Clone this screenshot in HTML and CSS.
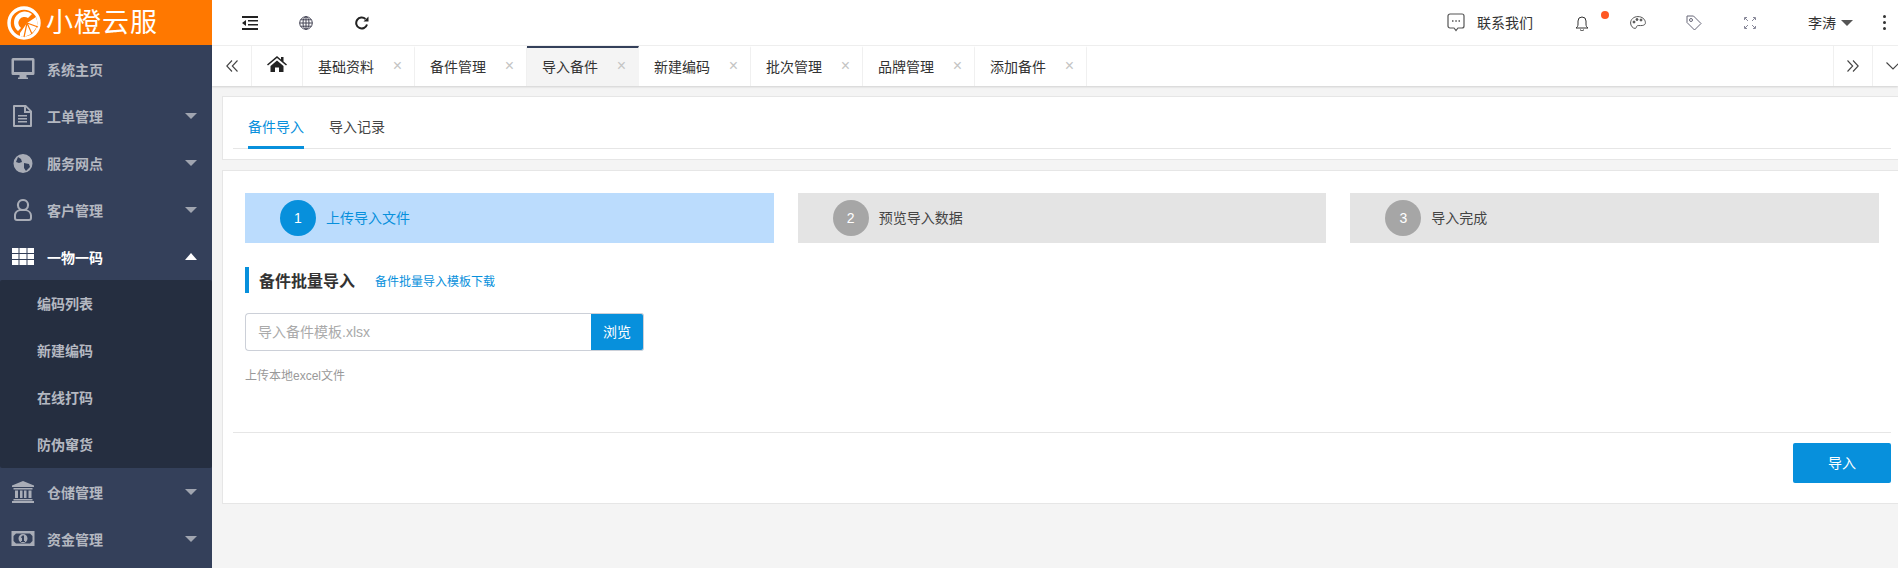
FILE: index.html
```html
<!DOCTYPE html>
<html lang="zh-CN">
<head>
    <meta charset="UTF-8">
    <title>小橙云服</title>
    <link rel="stylesheet" href="styles.css">
</head>
<body>
<div id="app">
    <aside class="sidebar">
        <div class="logo">
            <svg class="logo-mark" viewBox="0 0 34 34">
                <circle cx="17" cy="17" r="15" fill="none" stroke="#fff" stroke-width="3.4"/>
                <path d="M11 25 A11 11 0 0 1 25 8 L21 12 A6 6 0 0 0 14 22z" fill="#fff"/>
                <path d="M13 27 L20 17 L29 11 A14 14 0 0 1 13 30z" fill="#fff"/>
                <path d="M20 17 L17 31 M20 17 L25 28 M20 17 L31 21" stroke="#ff7800" stroke-width="1.2"/>
            </svg>
            <span class="logo-text">小橙云服</span>
        </div>
        <ul class="menu">
            <li class="menu-item">
                <svg class="menu-icon" viewBox="0 0 24 22"><path fill-rule="evenodd" d="M2 0h20a1.500 1.500 0 0 1 1.500 1.500v14a1.500 1.500 0 0 1-1.500 1.500H2a1.500 1.500 0 0 1-1.500-1.500v-14A1.500 1.500 0 0 1 2 0zM3 2.500v11.500h18V2.500z"/><path d="M8.500 17h7v2.500h1.500V21H7v-1.500h1.500z"/></svg>
                <span>系统主页</span>
            </li>
            <li class="menu-item">
                <svg class="menu-icon" viewBox="0 0 24 22"><path fill-rule="evenodd" d="M3 0h12l6 6v15a1 1 0 0 1-1 1H3a1 1 0 0 1-1-1V1a1 1 0 0 1 1-1zM4 2v18h15V8h-6V2zM15 2.500V6h3.500z"/><path d="M7 10h9v1.500H7zM7 13h9v1.500H7zM7 16h9v1.500H7z"/></svg>
                <span>工单管理</span><i class="caret"></i>
            </li>
            <li class="menu-item">
                <svg class="menu-icon" viewBox="0 0 24 22"><path fill-rule="evenodd" d="M12 2a9.500 9.500 0 1 1 0 19 9.500 9.500 0 0 1 0-19zM7 5l3 2 1 3-3 1-3-1zM13 11l5 1 1 3-4 4-2-3z"/></svg>
                <span>服务网点</span><i class="caret"></i>
            </li>
            <li class="menu-item">
                <svg class="menu-icon" viewBox="0 0 24 22"><path fill-rule="evenodd" d="M12 0a6 6 0 0 1 4 10.500c2.500 1 5 3 5 6V19a3 3 0 0 1-3 3H6a3 3 0 0 1-3-3v-2.500c0-3.500 2.500-5.500 5-6A6 6 0 0 1 12 0zM12 2a4 4 0 1 0 0 8 4 4 0 0 0 0-8zM9 12c-2.500.5-4 2.300-4 4.500V19a1 1 0 0 0 1 1h12a1 1 0 0 0 1-1v-2.500c0-2.200-1.500-4-4-4.500z"/></svg>
                <span>客户管理</span><i class="caret"></i>
            </li>
            <li class="menu-item open">
                <svg class="menu-icon" viewBox="0 0 24 22"><path d="M1 2h6.500v5H1zM8.500 2h7v5h-7zM16.500 2H23v5h-6.500zM1 8h6.500v5H1zM8.500 8h7v5h-7zM16.500 8H23v5h-6.500zM1 14h6.500v5H1zM8.500 14h7v5h-7zM16.500 14H23v5h-6.500z"/></svg>
                <span>一物一码</span><i class="caret up"></i>
            </li>
            <li>
                <ul class="submenu">
                    <li>编码列表</li>
                    <li>新建编码</li>
                    <li>在线打码</li>
                    <li>防伪窜货</li>
                </ul>
            </li>
            <li class="menu-item">
                <svg class="menu-icon" viewBox="0 0 24 22"><path d="M12 0l11 4.500V6H1V4.500zM2.500 7h19v1.500h-19zM4 9.500h3V17H4zM9 9.500h2.500V17H9zM13 9.500h2.500V17H13zM17.500 9.500h3V17h-3zM2.500 18h19v1.500h-19zM1 20h22v2H1z"/></svg>
                <span>仓储管理</span><i class="caret"></i>
            </li>
            <li class="menu-item">
                <svg class="menu-icon" viewBox="0 0 24 22"><path fill-rule="evenodd" d="M.5 3h23v15H.5zM5 5.500L2.500 8v5L5 15.500h14l2.500-2.500V8L19 5.500zM12 6a4.500 4.500 0 1 1 0 9 4.500 4.500 0 0 1 0-9zM11.500 7.500L10 9v1l1-.5V13h-1v1h4v-1h-1V7.500z"/></svg>
                <span>资金管理</span><i class="caret"></i>
            </li>
        </ul>
    </aside>

    <div class="main">
        <header class="topbar">
            <svg class="tool-icon first" viewBox="0 0 16 14"><path d="M0 0h16v2H0zM6 4h10v1.500H6zM6 8h10v1.500H6zM0 12h16v2H0zM4 4v6L0 7z" fill="#222"/></svg>
            <svg class="tool-icon" viewBox="0 0 14 14" fill="none" stroke="#445" stroke-width="1"><circle cx="7" cy="7" r="6.300"/><ellipse cx="7" cy="7" rx="3" ry="6.300"/><path d="M7 .7v12.600M.7 7h12.600M1.600 3.800h10.800M1.600 10.200h10.800"/></svg>
            <svg class="tool-icon" viewBox="0 0 14 14" fill="none" stroke="#222" stroke-width="2"><path d="M12 8.500A5.500 5.500 0 1 1 10.500 3"/><path d="M13.500 .5v5h-5z" fill="#222" stroke="none"/></svg>

            <div class="topbar-right">
                <svg class="r-chat" viewBox="0 0 18 19" fill="none" stroke="#555" stroke-width="1.200"><path d="M3 1h12a2 2 0 0 1 2 2v10a2 2 0 0 1-2 2h-4l-2 2.500L7 15H3a2 2 0 0 1-2-2V3a2 2 0 0 1 2-2z"/><path d="M5 8h1.500M8.300 8h1.500M11.500 8H13" stroke-width="1.500"/></svg>
                <span class="contact">联系我们</span>
                <span class="r-bell">
                    <svg viewBox="0 0 14 16" fill="none" stroke="#333" stroke-width="1"><path d="M1 13c1.500-1 2-2 2-4V6a4 4 0 0 1 8 0v3c0 2 .5 3 2 4zM5.500 14.500a1.500 1.500 0 0 0 3 0" /></svg>
                    <i class="dot"></i>
                </span>
                <svg class="r-palette" viewBox="0 0 16 13" fill="none" stroke="#555" stroke-width="1"><path d="M8 .6C3.500.6.600 3.500.6 7c0 3 2.400 5.400 4.400 5.400 1.500 0 1.300-1.600 1.800-2.300.7-1 3-.3 5.400-.6 2.300-.3 3.400-1.400 3.200-3C15.200 3.200 12 .6 8 .6z"/><circle cx="4" cy="6" r="1" fill="#555"/><circle cx="7" cy="3.500" r="1" fill="#555"/><circle cx="11" cy="4" r="1" fill="#555"/></svg>
                <svg class="r-tag" viewBox="0 0 16 16" fill="none" stroke="#667" stroke-width="1"><path d="M1 1h6.500L15 8.500 8.500 15 1 7.500z"/><circle cx="5" cy="5" r="1.500"/></svg>
                <svg class="r-expand" viewBox="0 0 12 12" fill="none" stroke="#889" stroke-width="1"><path d="M.5 3V.5H3M9 .5h2.500V3M.5 9v2.500H3M9 11.500h2.500V9M1 1l3 3M11 1L8 4M1 11l3-3M11 11L8 8"/></svg>
                <span class="user">李涛</span><i class="user-caret"></i>
                <span class="kebab"><i></i><i></i><i></i></span>
            </div>
        </header>

        <nav class="tabbar">
            <div class="tab-btn prev">
                <svg viewBox="0 0 12 12" fill="none" stroke="#444" stroke-width="1.100"><path d="M6 .5L.8 6 6 11.500M11.500 .5L6.300 6l5.200 5.500"/></svg>
            </div>
            <div class="tab-btn home">
                <svg viewBox="0 0 20 16"><path d="M10 0l4 3.400V1h2.500v4.500L20 8.500l-1 1.100L10 2 1 9.600 0 8.500zM3.500 10L10 4.500l6.500 5.500v6H12v-4.500H8V16H3.500z" fill="#222"/></svg>
            </div>
            <div class="tab">基础资料<span class="close">×</span></div>
            <div class="tab">备件管理<span class="close">×</span></div>
            <div class="tab active">导入备件<span class="close">×</span></div>
            <div class="tab">新建编码<span class="close">×</span></div>
            <div class="tab">批次管理<span class="close">×</span></div>
            <div class="tab">品牌管理<span class="close">×</span></div>
            <div class="tab">添加备件<span class="close">×</span></div>
            <div class="tab-space"></div>
            <div class="tab-btn next">
                <svg viewBox="0 0 12 12" fill="none" stroke="#444" stroke-width="1.100"><path d="M.5 .5L5.700 6 .5 11.500M6 .5L11.200 6 6 11.500"/></svg>
            </div>
            <div class="tab-btn more">
                <svg viewBox="0 0 14 8" fill="none" stroke="#444" stroke-width="1.100"><path d="M.5 .5L7 7 13.500 .5"/></svg>
            </div>
        </nav>

        <div class="content">
            <section class="card card-tabs">
                <div class="sub-tabs">
                    <span class="sub-tab active">备件导入</span>
                    <span class="sub-tab">导入记录</span>
                </div>
            </section>

            <section class="card card-form">
                <div class="steps">
                    <div class="step current"><span class="num">1</span><span class="step-label">上传导入文件</span></div>
                    <div class="step"><span class="num">2</span><span class="step-label">预览导入数据</span></div>
                    <div class="step"><span class="num">3</span><span class="step-label">导入完成</span></div>
                </div>

                <div class="form-title">
                    <h3>备件批量导入</h3>
                    <a class="tpl-link">备件批量导入模板下载</a>
                </div>

                <div class="file-row">
                    <div class="file-name">导入备件模板.xlsx</div>
                    <button class="browse">浏览</button>
                </div>
                <p class="hint">上传本地excel文件</p>

                <div class="form-foot">
                    <button class="submit">导入</button>
                </div>
            </section>
        </div>
    </div>
</div>
</body>
</html>
```

FILE: styles.css
```css
html, body {
    height: 100%;
    margin: 0;
    padding: 0;
    overflow: hidden;
}
body {
    font-family: "Liberation Sans", "Noto Sans CJK SC", sans-serif;
    font-size: 14px;
    color: #333;
    background: #f4f4f4;
}
ul {
    list-style: none;
    margin: 0;
    padding: 0;
}
#app {
    display: flex;
    height: 100vh;
}

/* sidebar */
.sidebar {
    width: 212px;
    flex-shrink: 0;
    background: #34405a;
    color: #b4b8c1;
}
.logo {
    display: flex;
    align-items: center;
    height: 45px;
    padding-left: 7px;
    box-sizing: border-box;
    background: #ff7800;
}
.logo-mark {
    width: 34px;
    height: 34px;
    flex-shrink: 0;
}
.logo-text {
    margin-left: 5px;
    font-size: 27px;
    line-height: 34px;
    letter-spacing: 1px;
    color: #fff;
    white-space: nowrap;
}
.menu-item {
    display: flex;
    align-items: center;
    height: 47px;
    padding: 0 15px 0 11px;
    font-weight: bold;
}
.menu-icon {
    width: 24px;
    height: 22px;
    margin-right: 12px;
    fill: #a9adb7;
    flex-shrink: 0;
}
.caret {
    width: 0;
    height: 0;
    margin-left: auto;
    border-left: 6px solid transparent;
    border-right: 6px solid transparent;
    border-top: 6px solid #a0a5b0;
}
.caret.up {
    border-top: none;
    border-bottom: 7px solid #fff;
}
.menu-item.open {
    color: #fff;
}
.menu-item.open .menu-icon {
    fill: #fff;
}
.submenu {
    background: #252e40;
    border-radius: 2px;
}
.submenu li {
    height: 47px;
    line-height: 49px;
    padding-left: 37px;
    font-weight: bold;
}

.main {
    display: flex;
    flex-direction: column;
    flex-grow: 1;
    width: 0;
}

/* top bar */
.topbar {
    display: flex;
    align-items: center;
    height: 45px;
    flex-shrink: 0;
    padding-left: 30px;
    background: #fff;
    border-bottom: 1px solid #f0f0f0;
}
.tool-icon {
    width: 16px;
    height: 14px;
    margin-right: 40px;
}
.topbar-right {
    display: flex;
    align-items: center;
    margin-left: auto;
}
.r-chat {
    width: 18px;
    height: 19px;
    margin-right: 12px;
}
.contact {
    width: 56px;
    margin-bottom: 2px;
    color: #333;
    white-space: nowrap;
}
.r-bell {
    position: relative;
    display: flex;
    width: 14px;
    height: 16px;
    margin-left: 42px;
}
.dot {
    position: absolute;
    top: -4px;
    left: 26px;
    width: 8px;
    height: 8px;
    border-radius: 50%;
    background: #ff5722;
}
.r-palette {
    width: 16px;
    height: 13px;
    margin-left: 41px;
}
.r-tag {
    width: 16px;
    height: 16px;
    margin-left: 40px;
}
.r-expand {
    width: 12px;
    height: 12px;
    margin-left: 42px;
}
.user {
    margin-left: 52px;
    margin-bottom: 2px;
    white-space: nowrap;
}
.user-caret {
    width: 0;
    height: 0;
    margin-left: 5px;
    border-left: 6px solid transparent;
    border-right: 6px solid transparent;
    border-top: 6px solid #555;
}
.kebab {
    display: flex;
    flex-direction: column;
    gap: 3px;
    margin: 0 12px 0 30px;
}
.kebab i {
    width: 3px;
    height: 3px;
    background: #333;
    border-radius: 50%;
}

/* tab bar */
.tabbar {
    display: flex;
    height: 40px;
    flex-shrink: 0;
    background: #fff;
    box-shadow: 0 1px 2px rgba(0, 0, 0, 0.15);
}
.tab-btn {
    display: flex;
    align-items: center;
    justify-content: center;
    box-sizing: border-box;
    border-right: 1px solid #f0f0f0;
    flex-shrink: 0;
}
.tab-btn.prev {
    width: 40px;
}
.tab-btn.prev svg, .tab-btn.next svg {
    width: 12px;
    height: 12px;
}
.tab-btn.home {
    width: 51px;
}
.tab-btn.home svg {
    width: 20px;
    height: 16px;
    margin-top: -4px;
}
.tab {
    display: flex;
    align-items: center;
    justify-content: space-between;
    width: 112px;
    padding: 0 12px 2px 15px;
    box-sizing: border-box;
    border-right: 1px solid #f0f0f0;
    border-top: 2px solid transparent;
    white-space: nowrap;
    color: #333;
}
.tab.active {
    background: #f4f4f4;
    border-top-color: #34405a;
    border-right-color: transparent;
}
.close {
    font-size: 16px;
    color: #c4c4c4;
}
.tab-space {
    flex-grow: 1;
}
.tab-btn.next {
    width: 40px;
    border-left: 1px solid #f0f0f0;
}
.tab-btn.more {
    width: 25px;
    border-right: none;
    justify-content: flex-start;
    padding-left: 13px;
}
.tab-btn.more svg {
    width: 14px;
    height: 8px;
    flex-shrink: 0;
}

/* content */
.content {
    padding: 10px 0 0 10px;
}
.card {
    background: #fff;
    border: 1px solid #e6e6e6;
    border-right: none;
}
.card-tabs {
    height: 64px;
    box-sizing: border-box;
    padding: 0 7px 0 10px;
}
.sub-tabs {
    display: flex;
    height: 52px;
    box-sizing: border-box;
    border-bottom: 1px solid #e6e6e6;
    padding-left: 15px;
}
.sub-tab {
    height: 52px;
    box-sizing: border-box;
    line-height: 60px;
    margin-right: 25px;
    color: #444;
}
.sub-tab.active {
    color: #0790dc;
    border-bottom: 3px solid #0790dc;
}
.card-form {
    margin-top: 10px;
    height: 334px;
    box-sizing: border-box;
    padding: 22px 7px 0 10px;
}
.steps {
    display: flex;
    gap: 24px;
    margin-left: 12px;
    margin-right: 12px;
}
.step {
    display: flex;
    align-items: center;
    flex: 1;
    height: 50px;
    padding-left: 35px;
    background: #e4e4e4;
    color: #444;
    font-size: 14px;
}
.step-label {
    margin-bottom: 2px;
}
.step.current {
    background: #bbdcfd;
    color: #0790dc;
}
.num {
    display: flex;
    align-items: center;
    justify-content: center;
    width: 36px;
    height: 36px;
    margin-right: 10px;
    border-radius: 50%;
    background: #a6a6a6;
    color: #fff;
    font-size: 14px;
}
.step.current .num {
    background: #0790dc;
}
.form-title {
    display: flex;
    align-items: center;
    height: 26px;
    margin: 24px 0 0 12px;
    padding-left: 10px;
    border-left: 4px solid #0790dc;
}
.form-title h3 {
    margin: 0 20px 0 0;
    font-size: 16px;
    color: #333;
}
.tpl-link {
    font-size: 12px;
    color: #0790dc;
}
.file-row {
    display: flex;
    width: 399px;
    height: 38px;
    margin: 20px 0 0 12px;
}
.file-name {
    flex-grow: 1;
    line-height: 36px;
    padding-left: 12px;
    border: 1px solid #ccd0d8;
    border-right: none;
    border-radius: 4px 0 0 4px;
    color: #aaa;
}
.browse {
    width: 53px;
    height: 38px;
    padding: 0 0 2px;
    border: 1px solid #ccd0d8;
    border-left: none;
    border-radius: 0 3px 3px 0;
    background: #0790dc;
    color: #fff;
    font: inherit;
}
.hint {
    margin: 16px 0 0 12px;
    font-size: 12px;
    line-height: 18px;
    color: #999;
}
.form-foot {
    display: flex;
    justify-content: flex-end;
    margin-top: 47px;
    padding-top: 10px;
    border-top: 1px solid #e6e6e6;
}
.submit {
    width: 98px;
    height: 40px;
    padding: 0 0 2px;
    border: none;
    border-radius: 2px;
    background: #0790dc;
    color: #fff;
    font: inherit;
}
```
